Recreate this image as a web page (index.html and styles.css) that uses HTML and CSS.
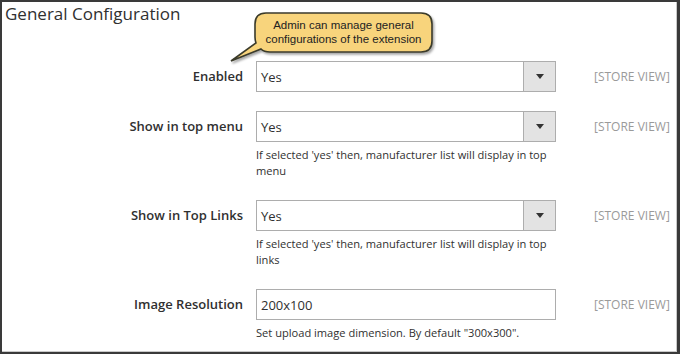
FILE: index.html
```html
<!DOCTYPE html>
<html>
<head>
<meta charset="utf-8">
<link rel="stylesheet" href="styles.css">
</head>
<body>
<div class="frame">
  <h1 class="title">General Configuration</h1>
  <div class="callout">
    <svg class="callout-shape" width="212" height="64" viewBox="0 0 212 64">
      <defs>
        <filter id="sh" x="-10%" y="-10%" width="130%" height="140%">
          <feDropShadow dx="1.5" dy="2" stdDeviation="1.2" flood-color="#000" flood-opacity="0.35"/>
        </filter>
      </defs>
      <path filter="url(#sh)" d="M37 4 H192 Q203 4 203 15 V32 Q203 43 192 43 H41 Q35 43 32 40 L2 52 L27 34 Q26 31 26 28 V15 Q26 4 37 4 Z" fill="#f8d47c" stroke="#3b3b2c" stroke-width="1.6"/>
    </svg>
    <div class="callout-text">Admin can manage general<br>configurations of the extension</div>
  </div>
  <div class="form">
    <div class="row">
      <label class="label">Enabled</label>
      <div class="control">
        <div class="select"><span class="value">Yes</span><span class="arrow"></span></div>
      </div>
      <div class="scope">[STORE VIEW]</div>
    </div>
    <div class="row">
      <label class="label">Show in top menu</label>
      <div class="control">
        <div class="select"><span class="value">Yes</span><span class="arrow"></span></div>
        <p class="note">If selected 'yes' then, manufacturer list will display in top menu</p>
      </div>
      <div class="scope">[STORE VIEW]</div>
    </div>
    <div class="row">
      <label class="label">Show in Top Links</label>
      <div class="control">
        <div class="select"><span class="value">Yes</span><span class="arrow"></span></div>
        <p class="note">If selected 'yes' then, manufacturer list will display in top links</p>
      </div>
      <div class="scope">[STORE VIEW]</div>
    </div>
    <div class="row">
      <label class="label">Image Resolution</label>
      <div class="control">
        <div class="input"><span class="value">200x100</span></div>
        <p class="note">Set upload image dimension. By default "300x300".</p>
      </div>
      <div class="scope">[STORE VIEW]</div>
    </div>
  </div>
</div>
</body>
</html>
```
FILE: styles.css
```css
* { box-sizing: border-box; }
html, body { margin: 0; padding: 0; background: #fff; }
body { font-family: "Open Sans", "DejaVu Sans", sans-serif; color: #303030; }

.frame {
  position: relative;
  width: 680px;
  height: 354px;
  border-top: 2px solid #3a3a3a;
  border-left: 2px solid #3a3a3a;
  border-right: 3px solid #3a3a3a;
  border-bottom: 2px solid #3a3a3a;
  box-shadow: inset -1px -1px 0 #c9c9c9;
  overflow: hidden;
  background: #fff;
}

.title {
  margin: 0;
  padding: 0 0 0 3px;
  font-size: 17px;
  line-height: 24px;
  font-weight: 400;
  color: #303030;
}

.callout {
  position: absolute;
  left: 227px;
  top: 7px;
  width: 212px;
  height: 64px;
}
.callout-shape { position: absolute; left: 0; top: 0; }
.callout-text {
  position: absolute;
  left: 26px;
  top: 10px;
  width: 177px;
  text-align: center;
  font-family: "Liberation Sans", Arial, sans-serif;
  font-size: 11.5px;
  line-height: 13.5px;
  color: #222;
}

.form {
  display: flex;
  flex-direction: column;
  gap: 19px;
  padding-top: 35px;
}

.row {
  display: grid;
  grid-template-columns: 241px 300px auto;
  column-gap: 13px;
  align-items: start;
}
.row .scope { margin-left: 25px; }

.label {
  text-align: right;
  font-size: 13px;
  font-weight: 600;
  line-height: 31px;
  color: #303030;
}

.select, .input {
  position: relative;
  height: 31px;
  border: 1px solid #adadad;
  background: #fff;
  display: flex;
  align-items: center;
}
.value {
  padding-left: 4px;
  font-size: 13px;
  color: #303030;
}
.arrow {
  position: absolute;
  right: 0;
  top: 0;
  width: 32px;
  height: 29px;
  background: #e3e3e3;
  border-left: 1px solid #adadad;
}
.arrow::after {
  content: "";
  position: absolute;
  left: 12px;
  top: 12px;
  border-left: 4px solid transparent;
  border-right: 4px solid transparent;
  border-top: 5px solid #333;
}

.note {
  margin: 5px 0 0 0;
  padding-bottom: 2px;
  font-size: 11.1px;
  line-height: 16px;
  color: #303030;
}

.scope {
  font-size: 12px;
  line-height: 31px;
  color: #9a9a9a;
}
```
